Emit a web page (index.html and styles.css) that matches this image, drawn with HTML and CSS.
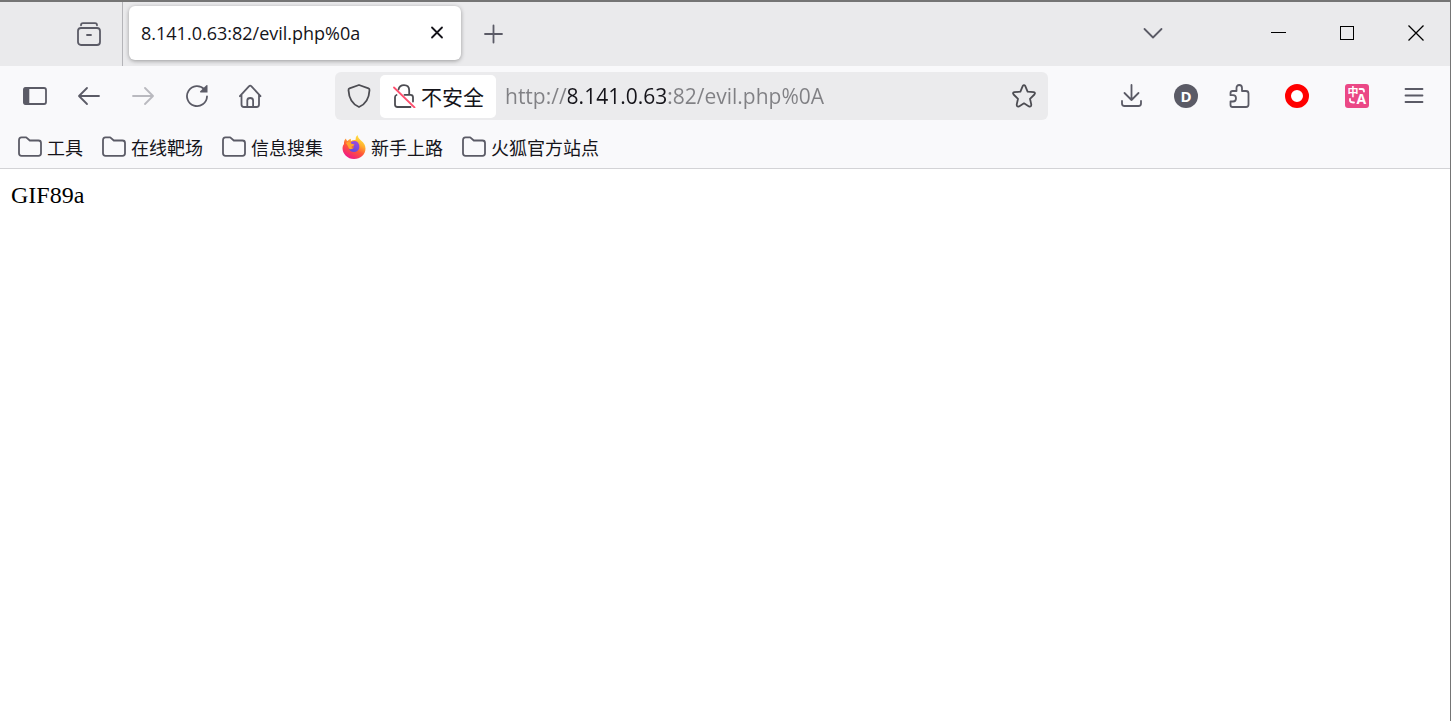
FILE: index.html
```html
<!DOCTYPE html>
<html lang="zh-CN">
<head>
    <meta charset="UTF-8">
    <meta name="viewport" content="width=device-width, initial-scale=1.0">
    <title>8.141.0.63:82/evil.php%0a</title>
    <link rel="stylesheet" href="styles.css">
</head>
<body>
    <header class="browser">
        <!-- Tab strip -->
        <div class="tab-bar">
            <div class="tab-view">
                <button class="icon-btn" aria-label="Firefox View">
                    <svg class="icon" viewBox="0 0 24 24"><path d="M4 3.3Q4 1.2 6 1.2H18Q20 1.2 20 3.3"/><rect x="1" y="6" width="22" height="17" rx="3"/><path d="M10 13H14"/></svg>
                </button>
            </div>
            <div class="tab">
                <span class="tab-title">8.141.0.63:82/evil.php%0a</span>
                <button class="tab-close" aria-label="Close tab">
                    <svg class="icon dark" viewBox="0 0 24 24"><path d="M7 6.500L17 16.500M17 6.500L7 16.500"/></svg>
                </button>
            </div>
            <button class="icon-btn" aria-label="New tab">
                <svg class="icon" viewBox="0 0 24 24"><path d="M12.5 3.500V20.500M4 12H21"/></svg>
            </button>
            <button class="icon-btn all-tabs" aria-label="List all tabs">
                <svg class="icon" viewBox="0 0 24 24"><path d="M3.5 7L12 15.5L20.5 7"/></svg>
            </button>
            <button class="window-btn" aria-label="Minimize">
                <svg class="icon window-icon" viewBox="0 0 24 24"><path d="M5 10.5H20"/></svg>
            </button>
            <button class="window-btn" aria-label="Maximize">
                <svg class="icon window-icon" viewBox="0 0 24 24"><path d="M5.5 4.5H18.5V17.5H5.5Z"/></svg>
            </button>
            <button class="window-btn" aria-label="Close">
                <svg class="icon window-icon smooth" viewBox="0 0 24 24"><path d="M4.5 3.5L19.5 18.5M19.5 3.5L4.5 18.5"/></svg>
            </button>
        </div>

        <!-- Navigation -->
        <div class="toolbar">
            <button class="icon-btn" aria-label="Sidebar">
                <svg class="icon" viewBox="0 0 24 24"><rect x="1" y="4" width="22" height="16" rx="2"/><path class="solid" d="M2 3.2H6.3V20.800H2Q.2 20.800 .2 18.5V5.5Q.2 3.200 2 3.200Z"/></svg>
            </button>
            <button class="icon-btn" aria-label="Back">
                <svg class="icon" viewBox="0 0 24 24"><path d="M22 12H2.5M10 4L2 12L10 20"/></svg>
            </button>
            <button class="icon-btn" aria-label="Forward" disabled>
                <svg class="icon" viewBox="0 0 24 24"><path d="M2 12H21.5M14 4L22 12L14 20"/></svg>
            </button>
            <button class="icon-btn" aria-label="Reload">
                <svg class="icon" viewBox="0 0 24 24"><path d="M19.5 5.5A10 10 0 1 0 22 12.5"/><path class="solid" d="M22.5 1.2V8.6H15.5Q14.6 8.2 15.2 7.3L21.4 1.2Q22 .8 22.5 1.2Z"/></svg>
            </button>
            <button class="icon-btn" aria-label="Home">
                <svg class="icon" viewBox="0 0 24 24"><path d="M.9 12.2L9.900 2.300Q11.200 1 12.500 2.300L21.500 12.200M2.500 11V20.5Q2.500 23 5 23H17.500Q20 23 20 20.5V11M8.300 22.5V16.5Q8.300 14 11.200 14Q14.100 14 14.100 16.5V22.5"/></svg>
            </button>

            <div class="url-bar">
                <button class="shield" aria-label="Tracking protection">
                    <svg class="icon" viewBox="0 0 24 24"><path d="M12 1L21.5 4.4Q22.6 4.8 22.5 6.2C22.1 14 18.5 20.2 12 23C5.5 20.2 1.9 14 1.5 6.2Q1.4 4.8 2.5 4.4Z"/></svg>
                </button>
                <button class="security">
                    <svg class="icon" viewBox="0 0 24 24"><path d="M6.5 5.5Q7.5 1.2 12 1.2Q17.2 1.2 17.2 6.5V10.8H18.5Q21 10.8 21 13.3V17.5M12.500 10.8H17M4.5 11Q3 11.5 3 13.3V20.5Q3 23 5.5 23H18.5"/><path class="slash" d="M2 3.5L22.5 23.5"/></svg>
                    <span>不安全</span>
                </button>
                <input class="url" type="text" aria-label="Address" value="http://8.141.0.63:82/evil.php%0A" spellcheck="false">
                <button class="star" aria-label="Bookmark this page">
                    <svg class="icon" viewBox="0 0 24 24"><path d="M10.7 2.1Q12 .2 13.3 2.1L15.6 7.6L21.7 8.2Q23.8 8.8 22.4 10.5L18 14.8L19.3 20.6Q19.3 23.2 17 22.4L12 19.3L7 22.4Q4.7 23.2 4.7 20.6L6 14.8L1.6 10.5Q.2 8.8 2.3 8.2L8.4 7.6Z"/></svg>
                </button>
            </div>

            <button class="icon-btn" aria-label="Downloads">
                <svg class="icon" viewBox="0 0 24 24"><path d="M11.500 1V16M4.500 9L11.500 16L18.500 9M2 17V19.5Q2 22 4.5 22H18.500Q21 22 21 19.5V17"/></svg>
            </button>
            <button class="icon-btn" aria-label="Account">
                <svg class="icon" viewBox="0 0 24 24"><circle class="solid" cx="12" cy="12" r="12"/><text class="badge-text" x="12" y="17.5" font-size="15">D</text></svg>
            </button>
            <button class="icon-btn" aria-label="Extensions">
                <svg class="icon" viewBox="0 0 24 24"><path d="M2.500 11V9.2Q2.500 7 4.700 7H8.500V4Q8.500 1 11.200 1Q14 1 14 4V7H18Q20.500 7 20.500 9.5V20.5Q20.500 23 18 23H4.500Q2.500 23 2.500 21V17.5H5Q8 17.5 8 14.2Q8 11.2 5 11.2H2.500Z"/></svg>
            </button>
            <button class="icon-btn ext-btn" aria-label="Proxy">
                <svg class="icon" viewBox="0 0 24 24"><circle cx="12" cy="12" r="9" fill="#fff" stroke="#f00" stroke-width="6"/></svg>
            </button>
            <button class="icon-btn ext-btn" aria-label="Translate">
                <svg class="icon" viewBox="0 0 24 24"><rect class="pink" width="24" height="24" rx="3"/><text class="badge-text cjk" x="8" y="12" font-size="11">中</text><text class="badge-text" x="16.3" y="20" font-size="14">A</text><path class="white" d="M14.500 5H17Q19 5 19 7.500M5 15V16.500Q5 18.500 9 18.500"/></svg>
            </button>
            <button class="icon-btn" aria-label="Menu">
                <svg class="icon" viewBox="0 0 24 24"><path d="M3.5 5H20.5M3.5 11.5H20.5M3.5 18H20.5"/></svg>
            </button>
        </div>

        <!-- Bookmarks -->
        <nav class="bookmarks">
            <a href="#"><svg class="icon folder" viewBox="0 0 24 24"><path d="M1 5.3Q1 2.300 3.5 2.300H8.2L11.800 5.500H20.5Q23 5.500 23 8V18.3Q23 20.8 20.5 20.8H3.5Q1 20.8 1 18.3Z"/></svg>工具</a>
            <a href="#"><svg class="icon folder" viewBox="0 0 24 24"><path d="M1 5.3Q1 2.300 3.5 2.300H8.2L11.800 5.500H20.5Q23 5.500 23 8V18.3Q23 20.8 20.5 20.8H3.5Q1 20.8 1 18.3Z"/></svg>在线靶场</a>
            <a href="#"><svg class="icon folder" viewBox="0 0 24 24"><path d="M1 5.3Q1 2.300 3.5 2.300H8.2L11.800 5.500H20.5Q23 5.500 23 8V18.3Q23 20.8 20.5 20.8H3.5Q1 20.8 1 18.3Z"/></svg>信息搜集</a>
            <a href="#">
                <svg class="icon firefox" viewBox="0 0 24 24">
                    <defs>
                        <linearGradient id="flame" x1=".85" y1="0" x2=".3" y2="1">
                            <stop offset="0" stop-color="#fff44f"/>
                            <stop offset=".35" stop-color="#ffb02e"/>
                            <stop offset=".6" stop-color="#ff5a36"/>
                            <stop offset="1" stop-color="#f0148c"/>
                        </linearGradient>
                        <linearGradient id="globe" x1=".7" y1="0" x2=".3" y2="1">
                            <stop offset="0" stop-color="#a04be0"/>
                            <stop offset="1" stop-color="#5b4bdf"/>
                        </linearGradient>
                    </defs>
                    <path fill="url(#flame)" d="M2 9Q1.700 5 4 3.500Q4 5 5.500 6Q7 4 9 3.800Q8.500 5 9 6Q11 4.600 13.500 5Q13 2 15.500 0Q16 3.500 19 5.500Q23.500 9 23.500 13.500C23.500 19.500 18.500 24 12 24C5.500 24 .5 19 .5 13Q.6 10.500 2 9Z"/>
                    <path fill="url(#globe)" d="M9 7Q13 5 16 7.500Q18 10 17.300 13Q16 17 12 17Q8 17 7 13.500Q9 14.500 11 13Q12.500 12.200 12 11.500L9.500 11.300Q8 10.500 9 9.500Z"/>
                    <path fill="#ffa42d" d="M4 8Q7 6 9 8.500L12.500 9.500Q12 11 9.800 11.500Q9 13 11.500 13Q9 15 7 13.500Q6 11 4 8Z"/>
                </svg>新手上路</a>
            <a href="#"><svg class="icon folder" viewBox="0 0 24 24"><path d="M1 5.3Q1 2.300 3.5 2.300H8.2L11.800 5.500H20.5Q23 5.500 23 8V18.3Q23 20.8 20.5 20.8H3.5Q1 20.8 1 18.3Z"/></svg>火狐官方站点</a>
        </nav>
    </header>

    <main class="page">GIF89a</main>
</body>
</html>
```
FILE: styles.css
```css
* {
    box-sizing: border-box;
}

body {
    margin: 0;
    min-height: 100vh;
    background-color: #fff;
    border-top: 2px solid #757575;
    border-right: 1px solid #757575;
}

.browser {
    font-family: "Open Sans", "Noto Sans CJK SC", sans-serif;
    color: #15141a;
    background-color: #f9f9fb;
    border-bottom: 1px solid #d3d3d6;
}

button {
    padding: 0;
    border: none;
    background: none;
    font: inherit;
    color: inherit;
    display: flex;
    align-items: center;
    justify-content: center;
    flex-shrink: 0;
}

/* Icons */
.icon {
    width: 24px;
    height: 24px;
    flex-shrink: 0;
    fill: none;
    stroke: #5b5b66;
    stroke-width: 1.8;
    stroke-linecap: round;
    stroke-linejoin: round;
}

.icon .solid {
    fill: #5b5b66;
    stroke: none;
}

.icon .pink {
    fill: #eb4886;
    stroke: none;
}

.icon .white {
    stroke: #fff;
}

.icon .slash {
    stroke: #ff4f6e;
}

.badge-text {
    fill: #fff;
    stroke: none;
    font-family: "Open Sans", sans-serif;
    font-weight: 700;
    text-anchor: middle;
}

.badge-text.cjk {
    font-family: "Noto Sans CJK SC", sans-serif;
}

.icon.dark {
    stroke: #15141a;
}

.icon.firefox {
    stroke: none;
}

.window-icon {
    stroke: #000;
    stroke-width: 1;
    stroke-linecap: butt;
    stroke-linejoin: miter;
    shape-rendering: crispEdges;
}

.window-icon.smooth {
    stroke-width: 1.3;
    shape-rendering: auto;
}

.icon-btn {
    width: 54px;
    height: 48px;
}

.icon-btn:disabled {
    opacity: 0.4;
}

.ext-btn {
    width: 60px;
}

/* Tab strip */
.tab-bar {
    display: flex;
    align-items: center;
    height: 64px;
    background-color: #eaeaec;
}

.tab-view {
    display: flex;
    align-items: center;
    justify-content: flex-end;
    width: 123px;
    height: 100%;
    padding-right: 6px;
    border-right: 1px solid #b4b4b8;
}

.tab {
    display: flex;
    align-items: center;
    justify-content: space-between;
    width: 332px;
    height: 54px;
    margin: 0 5px 2px 6px;
    padding: 0 12px;
    background-color: #fff;
    border-radius: 6px;
    box-shadow: 0 1px 4px rgba(0, 0, 0, 0.35);
}

.tab-title {
    font-size: 18px;
}

.all-tabs {
    margin-left: auto;
    margin-right: 63px;
}

.window-btn {
    width: 69px;
    height: 100%;
}

/* Navigation */
.toolbar {
    display: flex;
    align-items: center;
    padding: 6px 9px 6px 8px;
}

.url-bar {
    display: flex;
    align-items: center;
    flex: 1;
    min-width: 0;
    height: 48px;
    margin: 0 57px;
    background-color: #ebebed;
    border-radius: 6px;
}

.url-bar .icon {
    stroke: #4c4c52;
}

.shield {
    width: 45px;
    padding-left: 3px;
}

.security {
    gap: 5px;
    height: 43px;
    padding: 0 12px;
    background-color: #fff;
    border-radius: 5px;
    font-size: 21px;
}

/* Scheme and path are dimmed, only the host is dark */
.url {
    flex: 1;
    min-width: 0;
    height: 100%;
    padding: 0 9px;
    border: none;
    outline: none;
    font: 21px "Open Sans", sans-serif;
    color: transparent;
    caret-color: #15141a;
    background-image: linear-gradient(to right, #808084 72px, #15141a 72px, #15141a 173px, #808084 173px);
    -webkit-background-clip: text;
    background-clip: text;
}

.star {
    width: 48px;
    height: 100%;
}

/* Bookmarks */
.bookmarks {
    display: flex;
    align-items: center;
    gap: 19px;
    height: 42px;
    padding: 0 18px;
}

.bookmarks a {
    display: flex;
    align-items: center;
    gap: 5px;
    font-size: 18px;
    color: #15141a;
    text-decoration: none;
    white-space: nowrap;
}

.page {
    padding: 12px 11px;
    font-family: "Liberation Serif", serif;
    font-size: 24px;
    line-height: 29px;
    color: #000;
}
```
